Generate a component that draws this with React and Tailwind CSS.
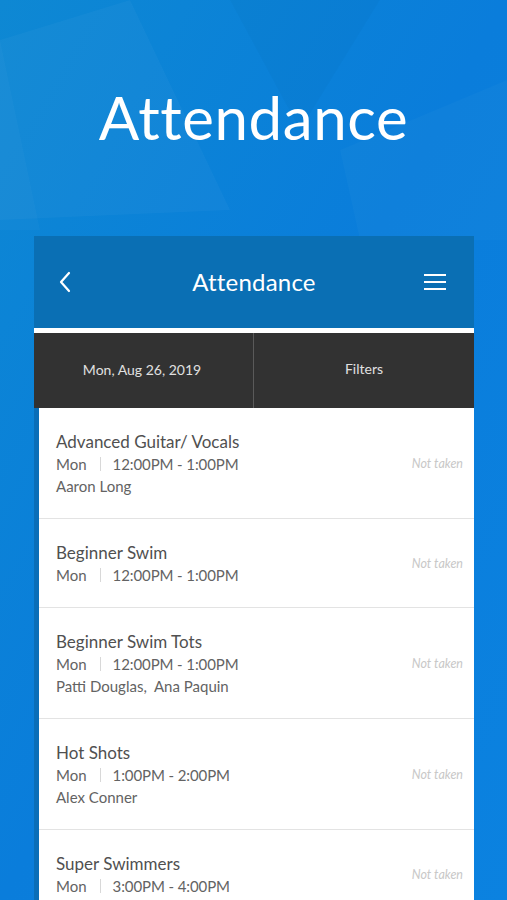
import React from "react";

function ChevronLeft() {
  return (
    <svg width="14" height="22" viewBox="0 0 14 22" fill="none">
      <path d="M11 2 L3 11 L11 20" stroke="white" strokeWidth="2.2" strokeLinecap="round" strokeLinejoin="round" />
    </svg>
  );
}

function Hamburger() {
  return (
    <svg width="24" height="18" viewBox="0 0 24 18" fill="none">
      <path d="M1 2 H23 M1 9 H23 M1 16 H23" stroke="white" strokeWidth="2" />
    </svg>
  );
}

const rows = [
  { title: "Advanced Guitar/ Vocals", time: "12:00PM - 1:00PM", who: "Aaron Long" },
  { title: "Beginner Swim", time: "12:00PM - 1:00PM" },
  { title: "Beginner Swim Tots", time: "12:00PM - 1:00PM", who: "Patti Douglas,  Ana Paquin" },
  { title: "Hot Shots", time: "1:00PM - 2:00PM", who: "Alex Conner" },
  { title: "Super Swimmers", time: "3:00PM - 4:00PM" },
];

export default function App() {
  return (
    <div
      className="relative w-[507px] h-[900px] overflow-hidden bg-gradient-to-br from-[#0e88d3] via-[#0a7ddb] to-[#0b82e0]"
      style={{ fontFamily: "Lato, 'Open Sans', sans-serif" }}
    >
      <svg className="absolute inset-0" width="507" height="900" viewBox="0 0 507 900">
        <polygon points="0,40 130,0 230,210 0,220" fill="#ffffff" opacity="0.03" />
        <polygon points="0,40 40,230 0,230" fill="#ffffff" opacity="0.025" />
        <polygon points="230,0 380,0 300,130" fill="#000000" opacity="0.02" />
        <polygon points="340,150 507,80 507,240 360,240" fill="#ffffff" opacity="0.025" />
      </svg>
      <div className="relative h-[236px] flex items-center justify-center">
        <h1 className="text-white text-[60px] leading-none tracking-[0.6px] mb-[2px]">Attendance</h1>
      </div>
      <div className="relative ml-[34px] w-[440px]">
        <div className="h-[92px] bg-[#0a6fb4] grid grid-cols-[1fr_auto_1fr] items-center pl-[24px] pr-[27px]">
          <div className="flex justify-start"><ChevronLeft /></div>
          <div className="text-white text-[24px] tracking-[0.2px] ml-[3px]">Attendance</div>
          <div className="flex justify-end"><Hamburger /></div>
        </div>
        <div className="h-[5px] bg-white" />
        <div className="h-[75px] bg-[#323232] grid grid-cols-2 text-[#e0e0e0] text-[14px]">
          <div className="flex items-center justify-center border-r border-[#5a5a5a] pr-[3px] pb-[2px]">Mon, Aug 26, 2019</div>
          <div className="flex items-center justify-center pb-[4px]">Filters</div>
        </div>
        <div className="border-l-[5px] border-[#0a6eb8] bg-white">
          {rows.map((r, i) => (
            <div key={i} className="flex items-center border-b border-[#e3e3e3] pl-[17px] pr-[11px] pt-[23px] pb-[21px]">
              <div className="flex-1">
                <div className="text-[17px] leading-[22px] text-[#505050]">{r.title}</div>
                <div className="flex items-center text-[15px] leading-[22px] text-[#636363]">
                  <span>Mon</span>
                  <span className="ml-[13px] mr-[12px] h-[14px] w-px bg-[#d8d8d8]" />
                  <span className="tracking-[-0.1px]">{r.time}</span>
                </div>
                {r.who && <div className="text-[15px] leading-[22px] text-[#636363] whitespace-pre">{r.who}</div>}
              </div>
              <div className="text-[12.5px] italic text-[#c8c8c8]">Not taken</div>
            </div>
          ))}
        </div>
      </div>
    </div>
  );
}
